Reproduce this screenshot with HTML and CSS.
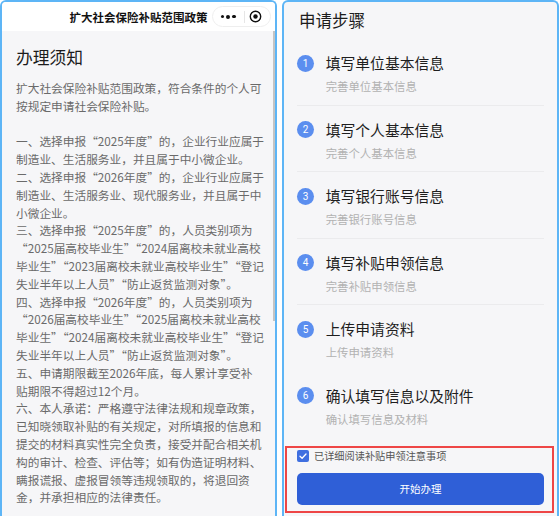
FILE: index.html
```html
<!DOCTYPE html>
<html lang="zh-CN">
<head>
<meta charset="utf-8">
<title>扩大社会保险补贴范围政策</title>
<link rel="stylesheet" href="styles.css">
</head>
<body>
<section class="panel panel-left">
  <header class="topbar">
    <div class="bar-title">扩大社会保险补贴范围政策</div>
    <div class="capsule">
      <span class="cap-dots"><i></i><i></i><i></i></span>
      <span class="cap-sep"></span>
      <svg class="cap-target" width="13" height="13" viewBox="0 0 13 13"><circle cx="6.5" cy="6.5" r="5.2" fill="none" stroke="#111" stroke-width="1.4"/><circle cx="6.5" cy="6.5" r="2.2" fill="#111"/></svg>
    </div>
  </header>
  <div class="scrollbar"></div>
  <div class="notice">
    <h1 class="notice-title">办理须知</h1>
    <div class="notice-text">
      <p>扩大社会保险补贴范围政策，符合条件的个人可<br>按规定申请社会保险补贴。</p>
      <p class="gap">一、选择申报“2025年度”的，企业行业应属于<br>制造业、生活服务业，并且属于中小微企业。</p>
      <p>二、选择申报“2026年度”的，企业行业应属于<br>制造业、生活服务业、现代服务业，并且属于中<br>小微企业。</p>
      <p>三、选择申报“2025年度”的，人员类别项为<br>“2025届高校毕业生”“2024届离校未就业高校<br>毕业生”“2023届离校未就业高校毕业生”“登记<br>失业半年以上人员”“防止返贫监测对象”。</p>
      <p>四、选择申报“2026年度”的，人员类别项为<br>“2026届高校毕业生”“2025届离校未就业高校<br>毕业生”“2024届离校未就业高校毕业生”“登记<br>失业半年以上人员”“防止返贫监测对象”。</p>
      <p>五、申请期限截至2026年底，每人累计享受补<br>贴期限不得超过12个月。</p>
      <p>六、本人承诺：严格遵守法律法规和规章政策，<br>已知晓领取补贴的有关规定，对所填报的信息和<br>提交的材料真实性完全负责，接受并配合相关机<br>构的审计、检查、评估等；如有伪造证明材料、<br>瞒报谎报、虚报冒领等违规领取的，将退回资<br>金，并承担相应的法律责任。</p>
    </div>
  </div>
</section>

<section class="panel panel-right">
  <h2 class="steps-title">申请步骤</h2>
  <ol class="steps">
    <li class="step"><div class="step-row"><span class="num">1</span><span class="step-name">填写单位基本信息</span></div><div class="step-desc">完善单位基本信息</div></li>
    <li class="step"><div class="step-row"><span class="num">2</span><span class="step-name">填写个人基本信息</span></div><div class="step-desc">完善个人基本信息</div></li>
    <li class="step"><div class="step-row"><span class="num">3</span><span class="step-name">填写银行账号信息</span></div><div class="step-desc">完善银行账号信息</div></li>
    <li class="step"><div class="step-row"><span class="num">4</span><span class="step-name">填写补贴申领信息</span></div><div class="step-desc">完善补贴申领信息</div></li>
    <li class="step no-line"><div class="step-row"><span class="num">5</span><span class="step-name">上传申请资料</span></div><div class="step-desc">上传申请资料</div></li>
    <li class="step no-line"><div class="step-row"><span class="num">6</span><span class="step-name">确认填写信息以及附件</span></div><div class="step-desc">确认填写信息及材料</div></li>
  </ol>
  <div class="footer">
    <label class="agree">
      <span class="checkbox"><svg width="12" height="12" viewBox="0 0 12 12"><path d="M3 6.2 L5.1 8.2 L9 4" fill="none" stroke="#fff" stroke-width="1.3" stroke-linecap="round" stroke-linejoin="round"/></svg></span>
      <span class="agree-text">已详细阅读补贴申领注意事项</span>
    </label>
    <button class="start-btn">开始办理</button>
  </div>
</section>
</body>
</html>
```

FILE: styles.css
```css
html, body {
  margin: 0;
  padding: 0;
}
body {
  width: 560px;
  height: 516px;
  overflow: hidden;
  background: #ffffff;
  display: flex;
  gap: 5px;
  font-family: "Noto Sans CJK SC", "Noto Sans", sans-serif;
}
.panel {
  box-sizing: border-box;
  width: 277px;
  height: 540px;
  flex: none;
  border: 2px solid #5db5f6;
  border-bottom: none;
  border-radius: 6px 6px 0 0;
  background: #f6f6f8;
  position: relative;
  overflow: hidden;
}
.panel-left {
  display: flex;
  flex-direction: column;
}
.topbar {
  height: 29px;
  flex: none;
  background: #ffffff;
  display: grid;
  grid-template-columns: 1fr auto 1fr;
  align-items: center;
}
.bar-title {
  grid-column: 2;
  font-size: 11.5px;
  font-weight: bold;
  color: #111;
  line-height: 16px;
  padding-top: 1px;
}
.capsule {
  grid-column: 3;
  justify-self: end;
  margin-right: 4px;
  box-sizing: border-box;
  width: 59px;
  height: 21px;
  border: 1px solid #eeeeee;
  border-radius: 11px;
  display: flex;
  align-items: center;
  padding-left: 8px;
}
.cap-dots {
  display: flex;
  align-items: center;
  gap: 2px;
}
.cap-dots i {
  display: block;
  width: 3.4px;
  height: 3.4px;
  border-radius: 50%;
  background: #111;
}
.cap-dots i:nth-child(2) {
  width: 4px;
  height: 4px;
}
.cap-sep {
  width: 1px;
  height: 12px;
  background: #e6e6e6;
  margin: 0 4px 0 8px;
}
.cap-target {
  display: block;
}
.scrollbar {
  position: absolute;
  right: 0;
  top: 29px;
  width: 2px;
  height: 290px;
  background: #c4c4c4;
}
.notice {
  padding: 14px 0 0 14px;
}
.notice-title {
  margin: 0;
  font-size: 16.8px;
  line-height: 24px;
  font-weight: normal;
  color: #1c1c1c;
}
.notice-text {
  margin-top: 10px;
  font-size: 11.7px;
  line-height: 17.8px;
  color: #6a6a6a;
  white-space: nowrap;
}
.notice-text p {
  margin: 0;
}
.notice-text p.gap {
  margin-top: 17.8px;
}
.steps-title {
  margin: 0;
  padding: 6.5px 0 0 15px;
  font-size: 16.5px;
  line-height: 22px;
  font-weight: normal;
  color: #1c1c1c;
}
.steps {
  list-style: none;
  margin: 8.5px 13px 0;
  padding: 0;
}
.step {
  padding: 13px 0 10.5px;
  border-bottom: 1px solid #ebebed;
}
.step.no-line {
  border-bottom-color: transparent;
}
.step-row {
  display: flex;
  align-items: center;
  gap: 11.7px;
  height: 22px;
}
.num {
  flex: none;
  width: 17px;
  height: 17px;
  border-radius: 50%;
  background: #5b8eef;
  color: #fff;
  font-family: Roboto, "Noto Sans", sans-serif;
  font-size: 10px;
  line-height: 17px;
  text-align: center;
}
.step-name {
  font-size: 14.8px;
  line-height: 22px;
  color: #1e1e1e;
}
.step-desc {
  margin-top: 4px;
  padding-left: 28.7px;
  font-size: 11.4px;
  line-height: 16px;
  color: #b2b2b2;
}
.footer {
  margin: 8px 3px 0 1px;
  border: 2px solid #ee4646;
  padding: 1px 8px 6px 10px;
}
.agree {
  display: flex;
  align-items: center;
  gap: 5px;
  height: 14px;
}
.checkbox {
  flex: none;
  width: 12px;
  height: 12px;
  border-radius: 2px;
  background: #3f6fe0;
  display: flex;
}
.agree-text {
  font-size: 10.2px;
  line-height: 14px;
  color: #555;
}
.start-btn {
  display: block;
  width: 100%;
  height: 32px;
  margin-top: 10px;
  border: none;
  border-radius: 5px;
  background: #2f5fd7;
  color: #ffffff;
  font-family: "Noto Sans CJK SC", sans-serif;
  font-size: 10.5px;
  line-height: 32px;
  padding: 0;
}
```
